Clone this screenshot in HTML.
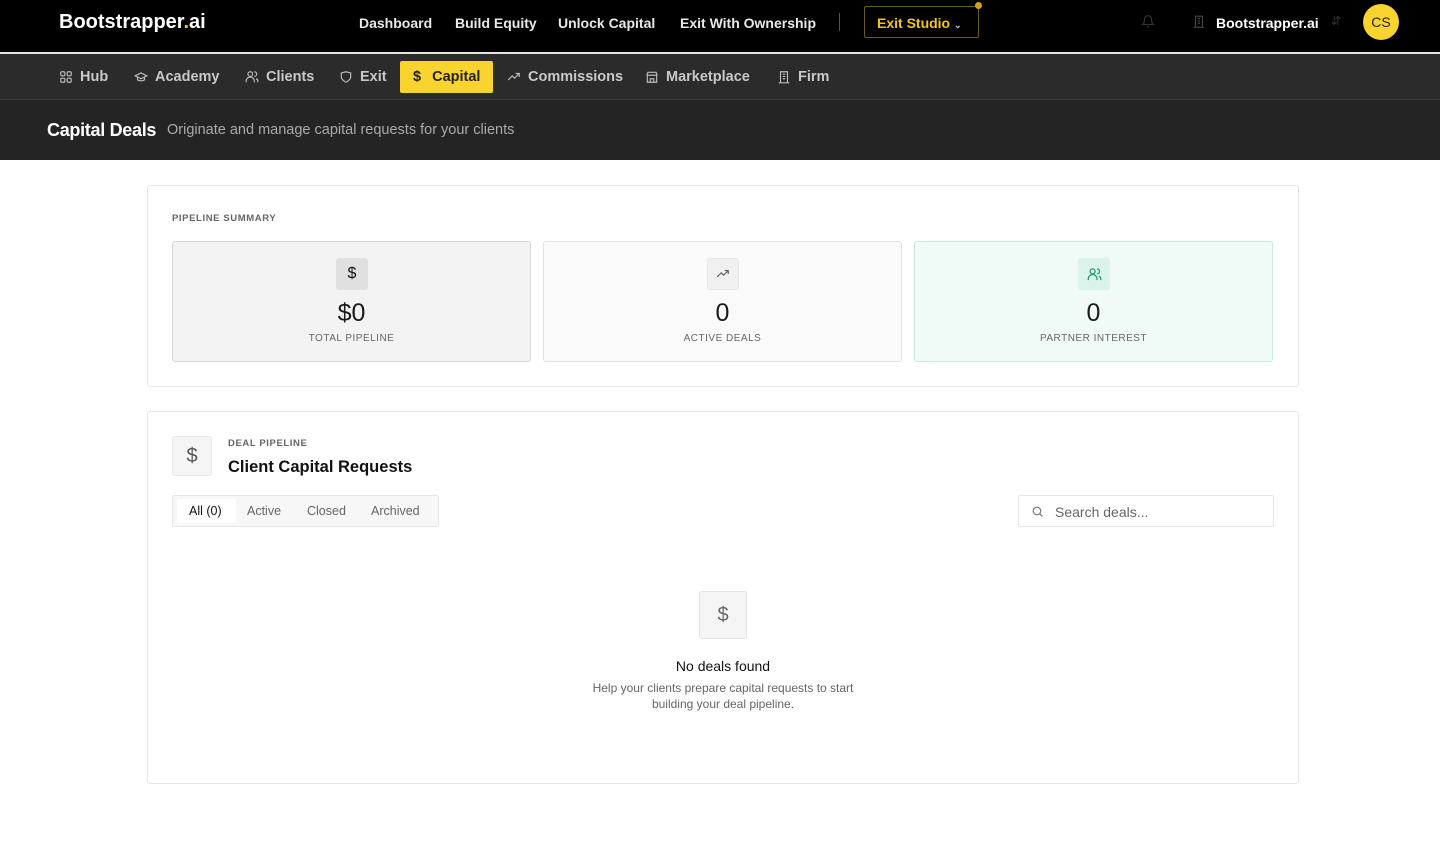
<!DOCTYPE html>
<html><head><meta charset="utf-8"><style>
*{box-sizing:border-box;margin:0;padding:0}
body{width:1440px;height:855px;background:#fff;font-family:"Liberation Sans",sans-serif;position:relative;overflow:hidden;color:#111}
.top{position:absolute;left:0;top:0;width:1440px;height:54px;background:#000;border-bottom:2px solid #e5e5e5}
.abs{position:absolute}
.logo{left:59px;top:11px;color:#fff;font-size:20px;font-weight:bold}
.tn{top:15px;color:#e8e8e8;font-size:14px;font-weight:bold}
.sub{position:absolute;left:0;top:54px;width:1440px;height:46px;background:#2b2b2b;border-bottom:1px solid #3a3a3a}
.si{position:absolute;top:15px;color:#c9c9c9;font-size:14.5px;font-weight:bold;display:flex;align-items:center;gap:7px}
.si svg{width:14px;height:14px}
.hdr{position:absolute;left:0;top:100px;width:1440px;height:60px;background:#242424}
.card{position:absolute;border:1px solid #e6e6e6;border-radius:3px;background:#fff}
.stat{position:absolute;top:241px;width:359px;height:121px;border:1px solid #e3e3e3;border-radius:3px;text-align:center}
.stat .ic{position:absolute;left:163px;top:16px;width:32px;height:32px;border-radius:3px;display:flex;align-items:center;justify-content:center}
.stat .v{position:absolute;left:0;right:0;top:57px;font-size:25px;color:#1a1a1a}
.stat .l{position:absolute;left:0;right:0;top:91px;font-size:10px;letter-spacing:.5px;color:#666}
.tab{position:absolute;top:8px;font-size:12.5px;color:#666}
</style></head><body>
<div class="top">
<div class="abs logo">Bootstrapper<span style="color:#f5c518">.</span>ai</div>
<div class="abs tn" style="left:359px">Dashboard</div>
<div class="abs tn" style="left:455px">Build Equity</div>
<div class="abs tn" style="left:558px">Unlock Capital</div>
<div class="abs tn" style="left:680px">Exit With Ownership</div>
<div class="abs" style="left:839px;top:13px;width:1px;height:18px;background:#555"></div>
<div class="abs" style="left:864px;top:6px;width:115px;height:32px;border:1px solid #6b5a1a;border-radius:2px;color:#f5c518;font-size:14px;font-weight:bold;padding:8px 0 0 12px">Exit Studio <span style="font-size:9px;color:#ccc">&#8964;</span></div>
<div class="abs" style="left:975px;top:2px;width:7px;height:7px;border-radius:50%;background:#d4a017"></div>
<svg class="abs" style="left:1141px;top:14px" width="14" height="15" viewBox="0 0 24 24" fill="none" stroke="#333" stroke-width="2"><path d="M6 8a6 6 0 0112 0c0 7 3 9 3 9H3s3-2 3-9M10 21h4"/></svg>
<svg class="abs" style="left:1192px;top:14px" width="14" height="15" viewBox="0 0 24 24" fill="none" stroke="#444" stroke-width="2"><path d="M6 22V3h12v19M10 7h4M10 11h4M10 15h4M3 22h18"/></svg>
<div class="abs tn" style="left:1216px;color:#fff">Bootstrapper.ai</div>
<div class="abs" style="left:1331px;top:14px;color:#333;font-size:12px">&#8693;</div>
<div class="abs" style="left:1363px;top:4px;width:36px;height:36px;border-radius:50%;background:#f9d32e;color:#222;font-size:14px;text-align:center;line-height:36px">CS</div>
</div>
<div class="sub">
<div class="si" style="left:59px"><svg viewBox="0 0 24 24" fill="none" stroke="#bbb" stroke-width="2"><rect x="3" y="3" width="7" height="7" rx="2"/><rect x="14" y="3" width="7" height="7" rx="2"/><rect x="3" y="14" width="7" height="7" rx="2"/><rect x="14" y="14" width="7" height="7" rx="2"/></svg>Hub</div>
<div class="si" style="left:134px"><svg viewBox="0 0 24 24" fill="none" stroke="#bbb" stroke-width="2"><path d="M2 10l10-5 10 5-10 5z M6 12v5c3 2 9 2 12 0v-5"/></svg>Academy</div>
<div class="si" style="left:245px"><svg viewBox="0 0 24 24" fill="none" stroke="#bbb" stroke-width="2"><circle cx="9" cy="7" r="4"/><path d="M2 21v-2a5 5 0 0114 0v2M16 3a4 4 0 010 8M22 21v-2a4 4 0 00-3-4"/></svg>Clients</div>
<div class="si" style="left:339px"><svg viewBox="0 0 24 24" fill="none" stroke="#bbb" stroke-width="2"><path d="M4 5l8-2 8 2v7c0 5-8 9-8 9s-8-4-8-9z"/></svg>Exit</div>
<div class="abs" style="left:400px;top:7px;width:93px;height:32px;background:#f9d32e;border-radius:2px"></div>
<div class="si" style="left:413px;color:#222"><span>$</span>&nbsp;Capital</div>
<div class="si" style="left:507px"><svg viewBox="0 0 24 24" fill="none" stroke="#bbb" stroke-width="2"><path d="M2 17l7-7 4 4 8-8M15 6h6v6"/></svg>Commissions</div>
<div class="si" style="left:645px"><svg viewBox="0 0 24 24" fill="none" stroke="#bbb" stroke-width="2"><path d="M3 9l2-5h14l2 5M4 9v12h16V9M3 9h18M9 21v-6h6v6"/></svg>Marketplace</div>
<div class="si" style="left:777px"><svg viewBox="0 0 24 24" fill="none" stroke="#bbb" stroke-width="2"><path d="M6 22V3h12v19M10 7h4M10 11h4M10 15h4M3 22h18"/></svg>Firm</div>
</div>
<div class="hdr">
<div class="abs" style="left:47px;top:20px;color:#fff;font-size:18px;font-weight:bold;letter-spacing:-.3px">Capital Deals</div>
<div class="abs" style="left:167px;top:22px;color:#aaa;font-size:14.5px">Originate and manage capital requests for your clients</div>
</div>
<div class="card" style="left:147px;top:185px;width:1152px;height:202px">
<div class="abs" style="left:24px;top:27px;font-size:9.5px;font-weight:bold;letter-spacing:.6px;color:#666">PIPELINE SUMMARY</div>
</div>
<div class="stat" style="left:172px;background:#f3f3f3;border-color:#d8d8d8"><div class="ic" style="background:#e0e0e0;font-size:16px">$</div><div class="v">$0</div><div class="l">TOTAL PIPELINE</div></div>
<div class="stat" style="left:543px;background:#fafafa"><div class="ic" style="background:#f0f0f0;border:1px solid #e5e5e5"><svg width="14" height="14" viewBox="0 0 24 24" fill="none" stroke="#666" stroke-width="2"><path d="M2 17l7-7 4 4 8-8M15 6h6v6"/></svg></div><div class="v">0</div><div class="l">ACTIVE DEALS</div></div>
<div class="stat" style="left:914px;background:#f0faf7;border-color:#c8ebe0"><div class="ic" style="background:#dcf3eb"><svg width="15" height="15" viewBox="0 0 24 24" fill="none" stroke="#1f9a70" stroke-width="2"><circle cx="9" cy="7" r="4"/><path d="M2 21v-2a5 5 0 0114 0v2M16 3a4 4 0 010 8M22 21v-2a4 4 0 00-3-4"/></svg></div><div class="v">0</div><div class="l">PARTNER INTEREST</div></div>
<div class="card" style="left:147px;top:411px;width:1152px;height:373px">
<div class="abs" style="left:24px;top:24px;width:40px;height:40px;border:1px solid #e8e8e8;border-radius:3px;background:#f5f5f5;color:#555;font-size:20px;text-align:center;line-height:38px">$</div>
<div class="abs" style="left:80px;top:26px;font-size:9.5px;font-weight:bold;letter-spacing:.6px;color:#666">DEAL PIPELINE</div>
<div class="abs" style="left:80px;top:46px;font-size:16.5px;font-weight:bold;color:#111">Client Capital Requests</div>
<div class="abs" style="left:24px;top:83px;width:267px;height:32px;border:1px solid #e6e6e6;border-radius:2px;background:#f7f7f7">
<div class="abs" style="left:4px;top:3px;width:59px;height:24px;background:#fff;border-radius:2px"></div>
<div class="tab" style="left:16px;color:#111">All (0)</div>
<div class="tab" style="left:74px">Active</div>
<div class="tab" style="left:134px">Closed</div>
<div class="tab" style="left:198px">Archived</div>
</div>
<div class="abs" style="left:870px;top:83px;width:256px;height:32px;border:1px solid #e6e6e6;border-radius:2px">
<svg class="abs" style="left:12px;top:9px" width="13" height="13" viewBox="0 0 24 24" fill="none" stroke="#777" stroke-width="2.2"><circle cx="11" cy="11" r="7"/><path d="M21 21l-5-5"/></svg>
<div class="abs" style="left:36px;top:8px;font-size:14px;color:#666">Search deals...</div>
</div>
<div class="abs" style="left:551px;top:179px;width:48px;height:48px;border:1px solid #e3e3e3;border-radius:3px;background:#f5f5f5;color:#666;font-size:20px;text-align:center;line-height:46px">$</div>
<div class="abs" style="left:0;right:0;top:246px;text-align:center;font-size:14px;color:#111">No deals found</div>
<div class="abs" style="left:0;right:0;top:268px;text-align:center;font-size:12px;color:#666;line-height:16px">Help your clients prepare capital requests to start<br>building your deal pipeline.</div>
</div>
</body></html>
